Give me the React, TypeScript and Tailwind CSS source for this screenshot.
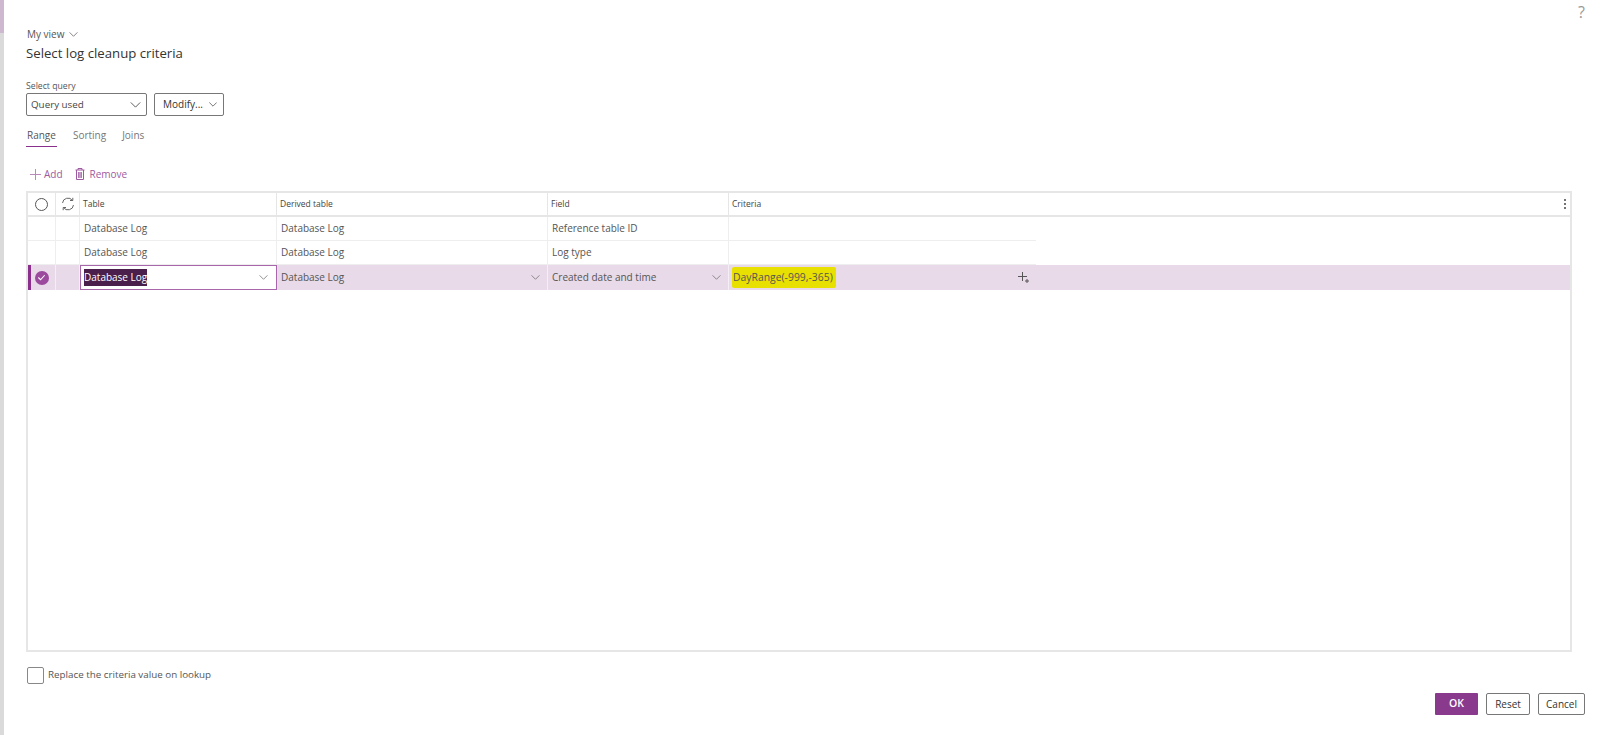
const font = { fontFamily: '"Open Sans", "Noto Sans", sans-serif' }

function Chevron({ className }: { className: string }) {
  return (
    <svg viewBox="0 0 12 7" fill="none" stroke="currentColor" strokeWidth="1" className={className}>
      <path d="M0.5 0.5 L6 6 L11.5 0.5" />
    </svg>
  )
}

const rows = [
  { table: 'Database Log', derived: 'Database Log', field: 'Reference table ID' },
  { table: 'Database Log', derived: 'Database Log', field: 'Log type' },
]

export default function App() {
  return (
    <div className="flex h-[735px] w-[1600px] overflow-hidden bg-white text-[#444]" style={font}>
      <div className="w-1 shrink-0 bg-[#dadada]">
        <div className="h-[33px] bg-[#cdb8d0]" />
      </div>
      <div className="flex min-w-0 flex-1 flex-col pl-[22px] pr-[28px]">
        <div className="-mr-[13px] flex h-[26px] justify-end pt-[3px] text-[16px] leading-[18px] text-[#999]">?</div>
        <div className="flex items-center gap-[4px] text-[10px] leading-[16px] text-[#555]">
          <span className="pl-[1px]">My view</span>
          <Chevron className="h-[5px] w-[9px]" />
        </div>
        <h1 className="mt-[1px] text-[13.2px] font-normal leading-[20px] text-[#333]">Select log cleanup criteria</h1>
        <div className="mt-[17px] text-[8.7px] leading-[12px] text-[#555]">Select query</div>
        <div className="mt-[1px] flex items-center gap-[7px]">
          <div className="flex h-[23px] w-[121px] items-center justify-between rounded-[2px] border border-[#777] px-[4px] text-[9.8px] text-[#444]">
            <span className="pt-[1px]">Query used</span>
            <Chevron className="mr-[1px] h-[6px] w-[11px]" />
          </div>
          <div className="flex h-[23px] w-[70px] items-center justify-between rounded-[2px] border border-[#777] pl-[8px] pr-[6px] text-[10px] text-[#333]">
            <span>Modify...</span>
            <Chevron className="h-[5px] w-[8px]" />
          </div>
        </div>
        <div className="mt-[11px] flex gap-[16px] text-[10px] leading-[16px] text-[#777]">
          <div className="border-b border-[#8a2f8c] pb-[3px] pl-[1px] pr-[1px] text-[#555]">Range</div>
          <div>Sorting</div>
          <div>Joins</div>
        </div>
        <div className="mt-[18px] flex h-[18px] items-center pl-[4px] text-[10px] text-[#9d5aa0]">
          <svg viewBox="0 0 11 11" fill="none" stroke="#b98bbb" strokeWidth="1" className="mr-[3px] h-[11px] w-[11px]">
            <path d="M5.5 0 V11 M0 5.5 H11" />
          </svg>
          <span>Add</span>
          <svg viewBox="0 0 10 12" fill="none" stroke="currentColor" strokeWidth="1" className="ml-[12px] mr-[5px] h-[12px] w-[10px]">
            <path d="M0.5 2 H9.5 M3 2 V0.5 H7 V2 M1.5 2 V11.5 H8.5 V2 M3.7 4 V10 M5 4 V10 M6.3 4 V10" />
          </svg>
          <span>Remove</span>
        </div>
        <div className="mt-[8px] flex h-[461px] flex-col border-2 border-[#e6e6e6]">
          <div className="flex h-[24px] shrink-0 border-b-2 border-[#e6e6e6] text-[8.5px] text-[#444]">
            <div className="flex w-[28px] items-center justify-center border-r border-[#e6e6e6]">
              <div className="h-[13px] w-[13px] rounded-full border border-[#555]" />
            </div>
            <div className="flex w-[24px] items-center justify-center border-r border-[#e6e6e6] text-[#666]">
              <svg viewBox="0 0 14 14" fill="none" stroke="currentColor" strokeWidth="1" className="h-[14px] w-[14px]">
                <path d="M1.5 6 A5.5 5.5 0 0 1 11.5 3.5 M12.5 8 A5.5 5.5 0 0 1 2.5 10.5 M9 3.5 H11.8 V0.8 M5 10.5 H2.2 V13.2" />
              </svg>
            </div>
            <div className="flex w-[197px] items-center border-r border-[#e6e6e6] pl-[3px]">Table</div>
            <div className="flex w-[271px] items-center border-r border-[#e6e6e6] pl-[3px]">Derived table</div>
            <div className="flex w-[181px] items-center border-r border-[#e6e6e6] pl-[3px]">Field</div>
            <div className="flex flex-1 items-center justify-between pl-[3px] pr-[4px]">
              <span>Criteria</span>
              <div className="flex flex-col gap-[2px]">
                <div className="h-[2px] w-[2px] rounded-full bg-[#444]" />
                <div className="h-[2px] w-[2px] rounded-full bg-[#444]" />
                <div className="h-[2px] w-[2px] rounded-full bg-[#444]" />
              </div>
            </div>
          </div>
          {rows.map((r, i) => (
            <div key={i} className="flex h-[24px] shrink-0 text-[10px] text-[#555]">
              <div className="w-[28px] border-b border-r border-[#eee]" />
              <div className="w-[24px] border-b border-r border-[#eee]" />
              <div className="flex w-[197px] items-center border-b border-r border-[#eee] pl-[4px]">{r.table}</div>
              <div className="flex w-[271px] items-center border-b border-r border-[#eee] pl-[4px]">{r.derived}</div>
              <div className="flex w-[181px] items-center border-b border-r border-[#eee] pl-[4px]">{r.field}</div>
              <div className="w-[307px] border-b border-[#eee]" />
            </div>
          ))}
          <div className="flex h-[25px] shrink-0 bg-[#e8dae8] text-[10px] text-[#555]">
            <div className="flex w-[28px] items-center justify-center border-l-[3px] border-r border-[#8a2f8c] border-r-[#f5eef5] pr-[3px]">
              <div className="flex h-[14px] w-[14px] items-center justify-center rounded-full bg-[#9b4a9d]">
                <svg viewBox="0 0 10 10" fill="none" stroke="white" strokeWidth="1.2" className="h-[9px] w-[9px]">
                  <path d="M1.5 5 L4 7.5 L8.5 2.5" />
                </svg>
              </div>
            </div>
            <div className="w-[24px] border-r border-[#f5eef5]" />
            <div className="flex w-[197px] items-center justify-between border border-[#a867aa] bg-white pl-[3px] pr-[8px] text-[#222]">
              <span className="bg-[#4a1f4c] py-[1px] text-white">Database Log</span>
              <Chevron className="h-[5px] w-[9px] text-[#666]" />
            </div>
            <div className="flex w-[271px] items-center justify-between border-r border-[#f5eef5] pl-[4px] pr-[7px]">
              <span>Database Log</span>
              <Chevron className="h-[5px] w-[9px] text-[#666]" />
            </div>
            <div className="flex w-[181px] items-center justify-between border-r border-[#f5eef5] pl-[4px] pr-[7px]">
              <span>Created date and time</span>
              <Chevron className="h-[5px] w-[9px] text-[#666]" />
            </div>
            <div className="flex w-[307px] items-center justify-between pl-[3px] pr-[7px]">
              <span className="rounded-[2px] bg-[#e8e000] py-[3px] pl-[1px] pr-[3px] text-[10.4px] text-[#555]">DayRange(-999,-365)</span>
              <svg viewBox="0 0 11 11" fill="none" stroke="#555" strokeWidth="1" className="h-[11px] w-[11px]">
                <path d="M4.5 0 V9 M0 4.5 H9 M9 7 V11 M7 9 H11" />
              </svg>
            </div>
          </div>
        </div>
        <div className="mt-[15px] flex items-center gap-[4px] text-[9.8px] text-[#555]">
          <div className="ml-[1px] h-[17px] w-[17px] rounded-[2px] border border-[#888]" />
          <span>Replace the criteria value on lookup</span>
        </div>
        <div className="-mr-[13px] mt-[9px] flex justify-end gap-[8px] text-[10px]">
          <button className="h-[22px] w-[43px] rounded-[1px] bg-[#8a3a8c] text-[10.5px] font-semibold text-white">OK</button>
          <button className="h-[22px] w-[44px] rounded-[2px] border border-[#777] text-[#333]">Reset</button>
          <button className="h-[22px] w-[47px] rounded-[2px] border border-[#777] text-[#333]">Cancel</button>
        </div>
      </div>
    </div>
  )
}
